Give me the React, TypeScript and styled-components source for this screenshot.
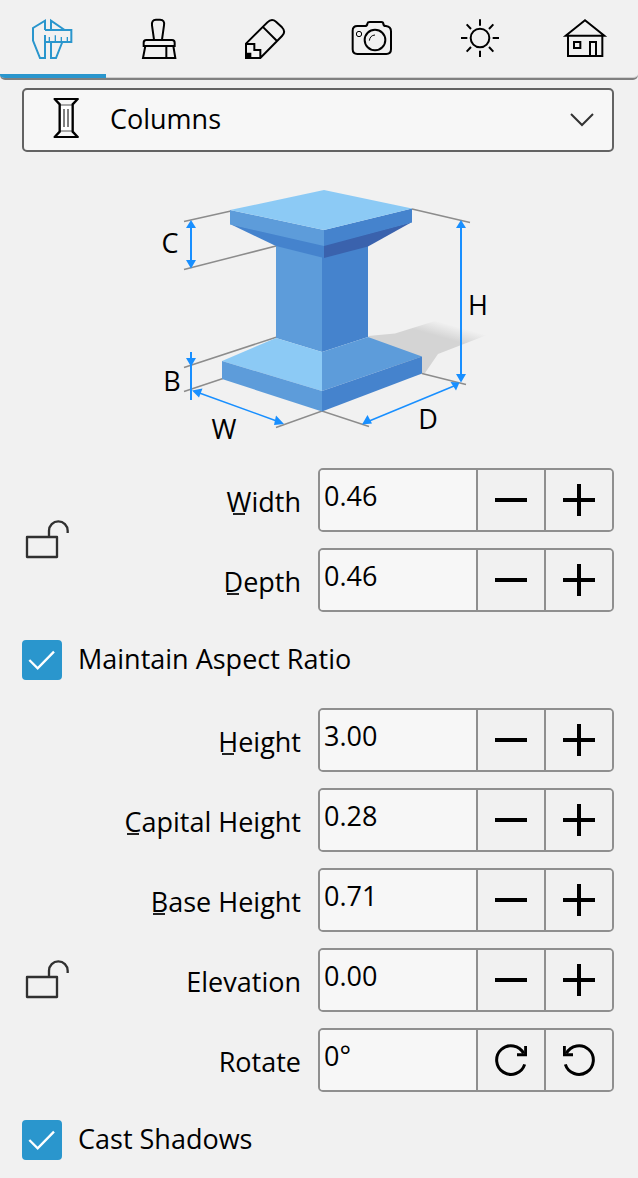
import React, { useState } from "react";
import styled, { createGlobalStyle, css } from "styled-components";

const ink = "#000000";
const accent = "#2a96cd";
const surface = "#f1f1f1";
const fieldFill = "#f7f7f7";
const fieldLine = "#8f8f8f";
const dimension = "#188fff";

const GlobalStyle = createGlobalStyle`
  *, *::before, *::after { box-sizing: border-box; }
  body {
    margin: 0;
    background: ${surface};
    color: ${ink};
    font-family: "Open Sans", "Noto Sans", sans-serif;
    font-size: 27px;
    line-height: 36px;
  }
  button, input, select { font: inherit; color: inherit; }
`;

const Panel = styled.main`
  background: ${surface};
`;

const TabBar = styled.div`
  display: grid;
  grid-template-columns: repeat(6, 1fr);
  overflow: hidden;
  border-bottom: 2px solid #808080;
  border-radius: 0 0 5px 5px;
  box-shadow: inset 0 -1px #d0d0d0;
`;

const Tab = styled.button<{ $active: boolean }>`
  display: flex;
  align-items: center;
  justify-content: center;
  height: 78px;
  padding: 0;
  border: 0;
  border-bottom: 4px solid transparent;
  background: transparent;
  color: ${ink};
  cursor: pointer;
  ${({ $active }) =>
    $active &&
    css`
      color: ${accent};
      border-bottom-color: ${accent};
    `}
`;

const TabIcon = styled.svg`
  display: block;
  width: 48px;
  height: 48px;
  fill: none;
  stroke: currentColor;
  stroke-width: 6;
`;

const Content = styled.form`
  display: flex;
  flex-direction: column;
  gap: 28px;
  padding: 8px 24px 18px 22px;
`;

const Picker = styled.div`
  position: relative;
`;

const PickerSelect = styled.select`
  display: block;
  width: 100%;
  height: 64px;
  padding: 0 60px 2px 86px;
  border: 2px solid #636363;
  border-radius: 5px;
  background: ${fieldFill};
  appearance: none;
`;

const PickerIcon = styled.svg`
  position: absolute;
  top: 10px;
  left: 24px;
  width: 40px;
  height: 40px;
  fill: none;
  stroke: ${ink};
  pointer-events: none;
`;

const PickerArrow = styled.svg`
  position: absolute;
  top: 20px;
  right: 20px;
  width: 24px;
  height: 24px;
  fill: none;
  stroke: #333333;
  stroke-width: 2;
  pointer-events: none;
`;

const Diagram = styled.svg`
  display: block;
  align-self: center;
  width: 340px;
  height: 260px;
  max-width: 100%;
  overflow: visible;
`;

const Fields = styled.div`
  display: grid;
  grid-template-columns: 48px minmax(0, 1fr) 50%;
  row-gap: 16px;
  align-items: center;
`;

const LockButton = styled.button<{ $row: string }>`
  grid-column: 1;
  grid-row: ${({ $row }) => $row};
  width: 48px;
  height: 48px;
  padding: 0;
  border: 0;
  background: transparent;
  cursor: pointer;
`;

const LockIcon = styled.svg`
  display: block;
  width: 48px;
  height: 48px;
  fill: none;
  stroke: #303030;
  stroke-width: 7;
`;

const FieldLabel = styled.label`
  grid-column: 2;
  padding: 4px 17px 0 0;
  text-align: right;
`;

const AccessKey = styled.span`
  position: relative;
  &::after {
    content: "";
    position: absolute;
    bottom: 5px;
    left: calc(50% - 6px);
    width: 12px;
    height: 2px;
    background: #222222;
  }
`;

const Spinner = styled.div`
  grid-column: 3;
  display: flex;
  height: 64px;
  overflow: hidden;
  border: 2px solid ${fieldLine};
  border-radius: 5px;
`;

const SpinnerInput = styled.input`
  flex: 1;
  min-width: 0;
  padding: 0 4px 8px;
  border: 0;
  outline: 0;
  background: ${fieldFill};
`;

const SpinnerButton = styled.button`
  display: flex;
  align-items: center;
  justify-content: center;
  flex: 0 0 68px;
  padding: 0;
  border: 0;
  border-left: 2px solid ${fieldLine};
  background: ${surface};
  cursor: pointer;
`;

const ButtonIcon = styled.svg`
  display: block;
  width: 32px;
  height: 32px;
  fill: none;
  stroke: ${ink};
  stroke-width: 4;
`;

const CheckRow = styled.label`
  display: flex;
  align-items: center;
  gap: 16px;
  height: 40px;
`;

const CheckBox = styled.span`
  display: grid;
  flex: none;
  width: 40px;
  height: 40px;
  > * { grid-area: 1 / 1; }
`;

const CheckInput = styled.input`
  width: 40px;
  height: 40px;
  margin: 0;
  border: 2px solid ${fieldLine};
  border-radius: 4px;
  background: ${fieldFill};
  appearance: none;
  &:checked { border-color: ${accent}; background: ${accent}; }
  & + svg { visibility: hidden; }
  &:checked + svg { visibility: visible; }
`;

const CheckMark = styled.svg`
  width: 40px;
  height: 40px;
  fill: none;
  stroke: #ffffff;
  stroke-width: 7;
  pointer-events: none;
`;

const CheckText = styled.span`
  padding-bottom: 2px;
`;

const tabs = [
  {
    name: "Dimensions",
    viewBox: "87 39 144 144",
    drawing: (
      <>
        <path d="M135 90V62L99 84V122L120 174H135V105M135 90H214V126H135M153 90V62L194 90M153 126V174H168L187 126" />
        <path d="M148 111V126M166 106V126M184 111V126M202 111V126" strokeWidth="4" />
      </>
    ),
  },
  {
    name: "Materials",
    viewBox: "405 39 144 144",
    drawing: (
      <path d="M462 119L456 76Q454 60 468 59H480Q495 60 492 76L486 119M431 138V128Q431 120 439 120H516Q524 120 524 128V138ZM436 138L429 174H526L520 138M499 138V174" />
    ),
  },
  {
    name: "Edit",
    viewBox: "726 39 144 144",
    drawing: (
      <>
        <path d="M738 174V131L802 67Q815 54 828 65L846 82Q859 95 846 108L781 174ZM790 82L831 123M738 132H763V150H781V174" />
        <path d="M738 161H751V174H738Z" fill="currentColor" />
      </>
    ),
  },
  {
    name: "Camera",
    viewBox: "90 39 144 144",
    drawing: (
      <>
        <path d="M118 78H140Q148 78 148 71Q149 66 155 66H190Q196 66 196 72Q197 78 204 78Q219 80 219 94V148Q219 162 205 162H118Q104 162 104 148V92Q104 78 118 78Z" />
        <circle cx="171" cy="120" r="31" />
        <circle cx="123" cy="102" r="8" strokeWidth="3" />
        <path d="M154 122Q156 106 171 105" strokeWidth="3" />
      </>
    ),
  },
  {
    name: "Light",
    viewBox: "408 39 144 144",
    drawing: (
      <>
        <circle cx="486" cy="114" r="28" />
        <path d="M486 58V77M486 152V171M429 114H448M524 114H543M446 73L459 87M526 73L513 87M446 155L459 141M526 155L513 141" />
      </>
    ),
  },
  {
    name: "Building",
    viewBox: "729 39 144 144",
    drawing: (
      <path d="M743 107L801 61L859 107ZM750 107V168H853V107M768 126H787V144H768ZM816 168V126H834V168" />
    ),
  },
];

const Minus = () => (
  <ButtonIcon viewBox="0 0 32 32"><path d="M0 16H32" /></ButtonIcon>
);

const Plus = () => (
  <ButtonIcon viewBox="0 0 32 32"><path d="M0 16H32M16 0V32" /></ButtonIcon>
);

const Turn = ({ counter = false }: { counter?: boolean }) => (
  <ButtonIcon viewBox="0 0 96 96">
    <g transform={counter ? "translate(96 0) scale(-1 1)" : undefined} strokeWidth="9">
      <path d="M89 61A43 43 0 1 1 86 28" />
      <path d="M92 6V32H66" />
    </g>
  </ButtonIcon>
);

const Lock = ({ row, name }: { row: string; name: string }) => (
  <LockButton type="button" $row={row} aria-label={name}>
    <LockIcon viewBox="66 168 144 144">
      <path strokeLinejoin="round" d="M81 231H171V291H81ZM147 231V212A28 28 0 0 1 203 212V219" />
    </LockIcon>
  </LockButton>
);

type NumberFieldProps = {
  id: string;
  label: string;
  hasKey?: boolean;
  initial: number;
  angle?: boolean;
};

const NumberField = ({ id, label, hasKey = true, initial, angle = false }: NumberFieldProps) => {
  const show = (n: number) => (angle ? `${n}°` : n.toFixed(2));
  const [text, setText] = useState(show(initial));
  const step = (direction: number) =>
    setText(show((parseFloat(text) || 0) + direction * (angle ? 15 : 0.01)));
  return (
    <>
      <FieldLabel htmlFor={id}>
        {hasKey ? <><AccessKey>{label[0]}</AccessKey>{label.slice(1)}</> : label}
      </FieldLabel>
      <Spinner>
        <SpinnerInput id={id} type="text" value={text} onChange={(e) => setText(e.target.value)} />
        <SpinnerButton type="button" aria-label={`${label} down`} onClick={() => step(-1)}>
          {angle ? <Turn /> : <Minus />}
        </SpinnerButton>
        <SpinnerButton type="button" aria-label={`${label} up`} onClick={() => step(1)}>
          {angle ? <Turn counter /> : <Plus />}
        </SpinnerButton>
      </Spinner>
    </>
  );
};

const Check = ({ label }: { label: string }) => (
  <CheckRow>
    <CheckBox>
      <CheckInput type="checkbox" defaultChecked />
      <CheckMark viewBox="0 0 120 120"><path d="M22 60L47 85L96 35" /></CheckMark>
    </CheckBox>
    <CheckText>{label}</CheckText>
  </CheckRow>
);

const ColumnDiagram = () => (
  <Diagram viewBox="148 180 340 260" role="img" aria-label="Column dimensions">
    <defs>
      <linearGradient id="shade" gradientUnits="userSpaceOnUse" x1="458" y1="342" x2="462" y2="328">
        <stop offset="0" stopColor="#d4d4d4" />
        <stop offset="1" stopColor="#d4d4d4" stopOpacity="0" />
      </linearGradient>
    </defs>
    <path fill="url(#shade)" d="M368 336L395 333.500L435 321L487 335L438 354L425 373L400 380Z" />
    <path
      fill="none"
      stroke="#8c8c8c"
      strokeWidth="1.500"
      d="M412 209L470 222.500M422 373.500L466 384.500M184 221.500L231 211M184 269.500L276 246M184 367.500L277 337M184 391.500L223 378.500M276 427.500L322 411L369 426.500"
    />
    <path fill="#5d9cda" d="M276 240L322 250V352L276 338Z" />
    <path fill="#4583cd" d="M322 250L368 240V337L322 352Z" />
    <path fill="#8ccaf5" d="M276 338L322 352V391L222 361Z" />
    <path fill="#5d9cda" d="M322 352L368 337L422 356.500L322 391ZM222 361L322 391V411.500L222 379Z" />
    <path fill="#4583cd" d="M322 391L422 356.500V373.500L322 411.500Z" />
    <path fill="#4583cd" d="M230 224L324 245V258L276 246Z" />
    <path fill="#3a62ad" d="M324 245L412 222L368 246.500L324 258Z" />
    <path fill="#5d9cda" d="M230 210L324 230V246L230 224.500Z" />
    <path fill="#4583cd" d="M324 230L412 208.500V222.500L324 246Z" />
    <path fill="#8ccaf5" d="M324 190L412 208.500L324 230L230 210Z" />
    <g stroke={dimension} fill="none">
      <path d="M191 224V264M461 224V378M191 352V400" strokeWidth="2" />
      <path d="M198 392.500L278 421.500M368 421.500L454 386" strokeWidth="1.500" />
    </g>
    <path
      fill={dimension}
      d="M191 220L196 228H186ZM191 268.500L196 260H186ZM461 220L466 228H456ZM461 382.500L466 374H456ZM191 366.500L196 358H186ZM192 390.500L202.500 388.500L199 397.500ZM284 424L276 415.500L274 425ZM362 424.500L367.500 415L372 423.500ZM459.500 382.500L450.500 382L456 390.500Z"
    />
    <g fontSize="27" textAnchor="middle" fill={ink}>
      <text x="170" y="253">C</text>
      <text x="172" y="391">B</text>
      <text x="224" y="439">W</text>
      <text x="478" y="315">H</text>
      <text x="428" y="429">D</text>
    </g>
  </Diagram>
);

export default function App() {
  const [active, setActive] = useState(0);
  return (
    <Panel>
      <GlobalStyle />
      <TabBar role="tablist">
        {tabs.map((tab, i) => (
          <Tab
            key={tab.name}
            type="button"
            role="tab"
            aria-label={tab.name}
            aria-selected={i === active}
            $active={i === active}
            onClick={() => setActive(i)}
          >
            <TabIcon viewBox={tab.viewBox}>{tab.drawing}</TabIcon>
          </Tab>
        ))}
      </TabBar>
      <Content>
        <Picker>
          <PickerSelect aria-label="Part">
            <option>Columns</option>
          </PickerSelect>
          <PickerIcon viewBox="138 294 120 120">
            <path d="M179 315H218V393H179Z" fill="#ffffff" stroke="#555555" strokeWidth="3" />
            <path d="M161 297H236M161 411H236" strokeWidth="6" />
            <path d="M164 297L179 313V395L164 411M233 297L218 313V395L233 411" strokeWidth="7" />
            <path d="M192 327V381M204 327V381" strokeWidth="3" />
          </PickerIcon>
          <PickerArrow viewBox="0 0 24 24"><path d="M1 6L12 17L23 6" /></PickerArrow>
        </Picker>
        <ColumnDiagram />
        <Fields>
          <Lock row="1 / span 2" name="Lock width and depth" />
          <NumberField id="width" label="Width" initial={0.46} />
          <NumberField id="depth" label="Depth" initial={0.46} />
        </Fields>
        <Check label="Maintain Aspect Ratio" />
        <Fields>
          <NumberField id="height" label="Height" initial={3} />
          <NumberField id="capital" label="Capital Height" initial={0.28} />
          <NumberField id="base" label="Base Height" initial={0.71} />
          <Lock row="4" name="Lock elevation" />
          <NumberField id="elevation" label="Elevation" hasKey={false} initial={0} />
          <NumberField id="rotate" label="Rotate" hasKey={false} initial={0} angle />
        </Fields>
        <Check label="Cast Shadows" />
      </Content>
    </Panel>
  );
}
